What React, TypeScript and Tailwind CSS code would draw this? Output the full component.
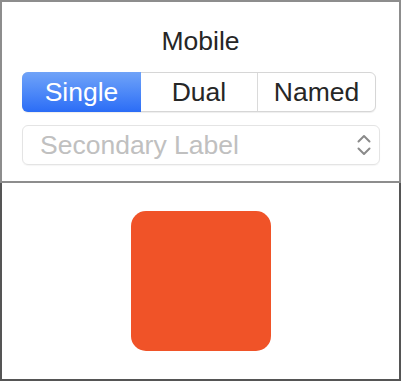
import React from 'react'

const segments = ['Single', 'Dual', 'Named']

function Chevrons() {
  return (
    <svg width="14" height="22" viewBox="0 0 14 22" fill="none" stroke="#8a8a8a" strokeWidth="2" strokeLinecap="round" strokeLinejoin="round">
      <polyline points="1.5,7.5 7,2 12.5,7.5" />
      <polyline points="1.5,14.5 7,20 12.5,14.5" />
    </svg>
  )
}

export default function App() {
  return (
    <div
      className="flex h-[381px] w-[401px] flex-col bg-white"
      style={{ fontFamily: '"Liberation Sans", Arial, sans-serif' }}
    >
      {/* Top panel */}
      <div className="flex flex-col border-x-2 border-y-2 border-[#8d8d8d] px-[20px] pb-[16px] pt-[24px]">
        <div className="text-center text-[26.5px] leading-[30px] text-[#262626]">Mobile</div>

        {/* Segmented control */}
        <div className="mt-[16px] flex h-[40px] w-[354px] rounded-[6px] border border-[#d6d6d6] bg-white shadow-[0_1px_1px_rgba(0,0,0,0.07)]">
          {segments.map((s, i) =>
            i === 0 ? (
              <div
                key={s}
                className="-my-px -ml-px flex w-[119px] items-center justify-center rounded-l-[6px] bg-gradient-to-b from-[#70a3f8] to-[#2b6cf6] text-[26.5px] leading-[30px] text-white"
              >
                {s}
              </div>
            ) : (
              <div
                key={s}
                className={`flex items-center justify-center text-[26.5px] leading-[30px] text-[#262626] ${
                  i === 1 ? 'w-[117px] border-r border-[#dadada]' : 'flex-1'
                }`}
              >
                {s}
              </div>
            )
          )}
        </div>

        {/* Popup button */}
        <div className="mt-[13px] flex h-[40px] w-[358px] items-center justify-between rounded-[6px] border border-[#e4e4e4] pl-[17px] pr-[8px] shadow-[0_1px_1px_rgba(0,0,0,0.04)]">
          <span className="text-[26.5px] leading-[30px] text-[#c0c0c0]">Secondary Label</span>
          <Chevrons />
        </div>
      </div>

      {/* Preview panel */}
      <div className="flex flex-1 items-center justify-center border-x-2 border-b-2 border-[#555555]">
        <div className="h-[140px] w-[140px] rounded-[15px] bg-[#f05328]" />
      </div>
    </div>
  )
}
